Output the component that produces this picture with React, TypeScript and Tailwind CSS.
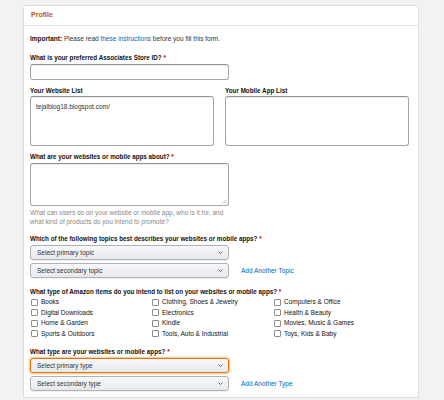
import React from 'react';

const items: string[][] = [
    ['Books', 'Clothing, Shoes & Jewelry', 'Computers & Office'],
    ['Digital Downloads', 'Electronics', 'Health & Beauty'],
    ['Home & Garden', 'Kindle', 'Movies, Music & Games'],
    ['Sports & Outdoors', 'Tools, Auto & Industrial', 'Toys, Kids & Baby'],
];

function Req() {
    return <span className="text-[#c40000]"> *</span>;
}

function Label({ children, className = '' }: { children: React.ReactNode; className?: string }) {
    return <div className={`text-[6.3px] font-bold leading-[9px] text-[#111] ${className}`}>{children}</div>;
}

function Chevron() {
    return (
        <svg width="5" height="3" viewBox="0 0 5 3" className="shrink-0">
            <path d="M0.5 0.5 L2.5 2.5 L4.5 0.5" fill="none" stroke="#555" strokeWidth="0.9" />
        </svg>
    );
}

function FakeSelect({ text, focused = false, className = '' }: { text: string; focused?: boolean; className?: string }) {
    return (
        <div
            className={`flex h-[15px] w-[199px] items-center justify-between rounded-[3px] border bg-gradient-to-b from-[#f7f8fa] to-[#e7e9ec] pl-[6px] pr-[5px] text-[#333] ${
                focused
                    ? 'border-[#e77600] shadow-[0_0_2px_1px_rgba(228,121,17,0.5)]'
                    : 'border-[#adb1b8] shadow-[0_1px_0_rgba(0,0,0,0.06)]'
            } ${className}`}
        >
            <span>{text}</span>
            <Chevron />
        </div>
    );
}

function Checkbox({ label }: { label: string }) {
    return (
        <div className="flex h-[10.5px] items-center">
            <span className="ml-[1px] h-[7px] w-[7px] rounded-[1px] border border-[#8d8d8d] bg-white" />
            <span className="ml-[3px] text-[#111]">{label}</span>
        </div>
    );
}

export default function App() {
    return (
        <div
            className="min-h-[400px] bg-[#f2f2f2] pl-[23px] pt-[5px] text-[6.5px]"
            style={{ fontFamily: '"Liberation Sans", Arial, sans-serif' }}
        >
            <div className="w-[396px] rounded-t-[3px] border border-[#dddddd] bg-white pb-[6px]">
                {/* HEADER */}
                <div className="flex h-[20px] items-center border-b border-[#e3e3e3] pl-[7px] text-[7px] font-bold text-[#c45500]">
                    Profile
                </div>

                <section className="flex flex-col pl-[6px] pt-[8px]">
                    {/* IMPORTANT NOTE */}
                    <div className="leading-[9px] text-[#333]">
                        <span className="font-bold text-[#111]">Important:</span> Please read{' '}
                        <span className="text-[#0066c0]">these instructions</span> before you fill this form.
                    </div>

                    {/* STORE ID */}
                    <Label className="mt-[10px]">
                        What is your preferred Associates Store ID?<Req />
                    </Label>
                    <div className="mt-[2px] h-[16px] w-[199px] rounded-[3px] border border-[#a6a6a6] border-t-[#949494] shadow-[inset_0_1px_0_rgba(0,0,0,0.07)]" />

                    {/* WEBSITE / APP LISTS */}
                    <div className="mt-[6px] flex gap-[11px]">
                        <div className="flex flex-col">
                            <Label>Your Website List</Label>
                            <div className="mt-[1px] h-[50px] w-[184px] rounded-[3px] border border-[#a6a6a6] border-t-[#949494] px-[5px] pt-[5px] leading-[9px] text-[#333] shadow-[inset_0_1px_0_rgba(0,0,0,0.07)]">
                                tejalblog18.blogspot.com/
                            </div>
                        </div>
                        <div className="flex flex-col">
                            <Label>Your Mobile App List</Label>
                            <div className="mt-[1px] h-[50px] w-[184px] rounded-[3px] border border-[#a6a6a6] border-t-[#949494] shadow-[inset_0_1px_0_rgba(0,0,0,0.07)]" />
                        </div>
                    </div>

                    {/* ABOUT */}
                    <Label className="mt-[6px]">
                        What are your websites or mobile apps about?<Req />
                    </Label>
                    <div className="relative mt-[2px] h-[43px] w-[199px] rounded-[3px] border border-[#a6a6a6] border-t-[#949494] shadow-[inset_0_1px_0_rgba(0,0,0,0.07)]">
                        <svg width="5" height="5" viewBox="0 0 5 5" className="absolute bottom-[1px] right-[1px]">
                            <path d="M4.5 0.5 L0.5 4.5 M4.5 2.5 L2.5 4.5" stroke="#999" strokeWidth="0.6" />
                        </svg>
                    </div>
                    <div className="mt-[2px] leading-[9px] text-[#888]">
                        What can users do on your website or mobile app, who is it for, and
                        <br />
                        what kind of products do you intend to promote?
                    </div>

                    {/* TOPICS */}
                    <Label className="mt-[8px]">
                        Which of the following topics best describes your websites or mobile apps?<Req />
                    </Label>
                    <FakeSelect text="Select primary topic" className="mt-[2px]" />
                    <div className="mt-[3px] flex items-center">
                        <FakeSelect text="Select secondary topic" />
                        <span className="ml-[12px] text-[#0066c0]">Add Another Topic</span>
                    </div>

                    {/* AMAZON ITEMS */}
                    <Label className="mt-[9px]">
                        What type of Amazon items do you intend to list on your websites or mobile apps?<Req />
                    </Label>
                    <div className="mt-[1px] grid grid-cols-[121px_122px_1fr]">
                        {items.flat().map((label) => (
                            <Checkbox key={label} label={label} />
                        ))}
                    </div>

                    {/* TYPE */}
                    <Label className="mt-[8px]">
                        What type are your websites or mobile apps?<Req />
                    </Label>
                    <FakeSelect text="Select primary type" focused className="mt-[2px]" />
                    <div className="mt-[3px] flex items-center">
                        <FakeSelect text="Select secondary type" />
                        <span className="ml-[12px] text-[#0066c0]">Add Another Type</span>
                    </div>
                </section>
            </div>
        </div>
    );
}
